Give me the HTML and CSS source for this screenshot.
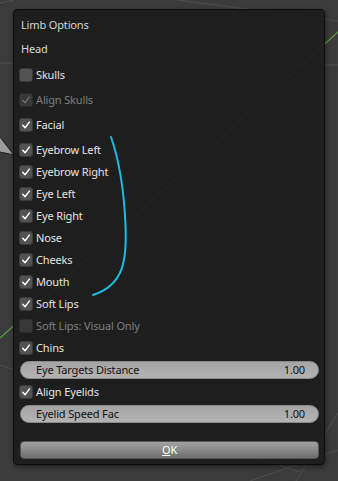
FILE: index.html
```html
<!DOCTYPE html>
<html>
<head>
<meta charset="utf-8">
<link rel="stylesheet" href="styles.css">
</head>
<body>
<div class="scene">
  <svg class="viewport" width="338" height="481" viewBox="0 0 338 481">
    <line x1="170" y1="-1" x2="338" y2="21" class="grid"/>
    <line x1="0" y1="63" x2="338" y2="65" class="grid"/>
    <line x1="0" y1="3" x2="14" y2="0" class="grid"/>
    <line x1="0" y1="365" x2="30" y2="375" class="grid"/>
    <line x1="250" y1="481" x2="338" y2="450" class="grid"/>
    <line x1="296" y1="481" x2="338" y2="413" class="grid"/>
    <line x1="200" y1="440" x2="300" y2="472" class="grid"/>
    <line x1="0" y1="338" x2="338" y2="32" class="axis"/>
    <polygon points="0,137 14,155 0,152" class="bone"/>
    <polyline points="0,137 14,155 0,152" class="bone-edge"/>
  </svg>
  <div class="panel">
    <div class="row title"><span class="lbl">Limb Options</span></div>
    <div class="row title mt2"><span class="lbl">Head</span></div>
    <div class="row check mt4"><span class="box"></span><span class="lbl">Skulls</span></div>
    <div class="row check off mt3"><span class="box"><svg viewBox="0 0 14 14"><path d="M3.2 7.4 L5.9 10.2 L10.9 3.6"/></svg></span><span class="lbl">Align Skulls</span></div>
    <div class="row check mt3"><span class="box"><svg viewBox="0 0 14 14"><path d="M3.2 7.4 L5.9 10.2 L10.9 3.6"/></svg></span><span class="lbl">Facial</span></div>
    <div class="row check mt3"><span class="box"><svg viewBox="0 0 14 14"><path d="M3.2 7.4 L5.9 10.2 L10.9 3.6"/></svg></span><span class="lbl">Eyebrow Left</span></div>
    <div class="row check"><span class="box"><svg viewBox="0 0 14 14"><path d="M3.2 7.4 L5.9 10.2 L10.9 3.6"/></svg></span><span class="lbl">Eyebrow Right</span></div>
    <div class="row check"><span class="box"><svg viewBox="0 0 14 14"><path d="M3.2 7.4 L5.9 10.2 L10.9 3.6"/></svg></span><span class="lbl">Eye Left</span></div>
    <div class="row check"><span class="box"><svg viewBox="0 0 14 14"><path d="M3.2 7.4 L5.9 10.2 L10.9 3.6"/></svg></span><span class="lbl">Eye Right</span></div>
    <div class="row check"><span class="box"><svg viewBox="0 0 14 14"><path d="M3.2 7.4 L5.9 10.2 L10.9 3.6"/></svg></span><span class="lbl">Nose</span></div>
    <div class="row check"><span class="box"><svg viewBox="0 0 14 14"><path d="M3.2 7.4 L5.9 10.2 L10.9 3.6"/></svg></span><span class="lbl">Cheeks</span></div>
    <div class="row check"><span class="box"><svg viewBox="0 0 14 14"><path d="M3.2 7.4 L5.9 10.2 L10.9 3.6"/></svg></span><span class="lbl">Mouth</span></div>
    <div class="row check"><span class="box"><svg viewBox="0 0 14 14"><path d="M3.2 7.4 L5.9 10.2 L10.9 3.6"/></svg></span><span class="lbl">Soft Lips</span></div>
    <div class="row check off"><span class="box"></span><span class="lbl">Soft Lips: Visual Only</span></div>
    <div class="row check"><span class="box"><svg viewBox="0 0 14 14"><path d="M3.2 7.4 L5.9 10.2 L10.9 3.6"/></svg></span><span class="lbl">Chins</span></div>
    <div class="row"><div class="slider"><span class="lbl">Eye Targets Distance</span><span class="lbl">1.00</span></div></div>
    <div class="row check"><span class="box"><svg viewBox="0 0 14 14"><path d="M3.2 7.4 L5.9 10.2 L10.9 3.6"/></svg></span><span class="lbl">Align Eyelids</span></div>
    <div class="row"><div class="slider"><span class="lbl">Eyelid Speed Fac</span><span class="lbl">1.00</span></div></div>
    <div class="okrow"><div class="ok"><span class="lbl"><span class="u">O</span>K</span></div></div>
  </div>
  <svg class="annot" width="338" height="481" viewBox="0 0 338 481">
    <path d="M111 137 C119 160 124 190 125.5 225 C127 260 124 285 93 295"/>
  </svg>
</div>
</body>
</html>
```

FILE: styles.css
```css
html, body {
  margin: 0;
  padding: 0;
}
body {
  width: 338px;
  height: 481px;
  overflow: hidden;
  background: #3c3c3c;
  font-family: "Noto Sans", "DejaVu Sans", sans-serif;
  font-size: 11px;
  letter-spacing: -0.15px;
}
.scene {
  position: relative;
  width: 338px;
  height: 481px;
  padding-top: 9px;
  box-sizing: border-box;
}
.viewport {
  position: absolute;
  left: 0;
  top: 0;
}
.grid {
  stroke: #505050;
  stroke-width: 1;
}
.axis {
  stroke: #5a9e44;
  stroke-width: 1.2;
}
.bone {
  fill: #9c9c9c;
}
.bone-edge {
  fill: none;
  stroke: #1a1a1a;
  stroke-width: 1;
}
.panel {
  position: relative;
  margin-left: 13px;
  width: 312px;
  height: 456px;
  box-sizing: border-box;
  border: 1px solid #0c0c0c;
  border-radius: 4px;
  background: rgba(29, 29, 29, 0.94);
  box-shadow: 1px 2px 5px rgba(0, 0, 0, 0.45);
  padding: 4px 5px 0 5px;
  display: flex;
  flex-direction: column;
}
.row {
  height: 22px;
  display: flex;
  align-items: center;
  color: #e4e4e4;
  flex-shrink: 0;
}
.lbl {
  margin-bottom: 2px;
}
.title {
  padding-left: 2px;
  color: #d6d6d6;
}
.mt2 { margin-top: 2px; }
.mt3 { margin-top: 3px; }
.mt4 { margin-top: 4px; }
.check {
  gap: 3px;
}
.box {
  width: 14px;
  height: 14px;
  box-sizing: border-box;
  border-radius: 3px;
  background: #525252;
  border: 1px solid #3a3a3a;
  display: flex;
}
.box svg {
  width: 12px;
  height: 12px;
}
.box path {
  fill: none;
  stroke: #ffffff;
  stroke-width: 1.7;
  stroke-linecap: round;
  stroke-linejoin: round;
}
.off {
  color: #7f7f7f;
}
.off .box {
  background: #383838;
  border-color: #2c2c2c;
}
.off .box path {
  stroke: #6a6a6a;
}
.slider {
  flex: 1;
  height: 18px;
  margin-left: 1px;
  border-radius: 9px;
  background: linear-gradient(#a5a5a5, #b3b3b3);
  border: 1px solid #8a8a8a;
  box-sizing: border-box;
  color: #111111;
  display: flex;
  align-items: center;
  justify-content: space-between;
  padding: 0 13px 0 15px;
}
.slider .lbl {
  margin-bottom: 1px;
}
.okrow {
  margin-top: 16px;
  padding-left: 1px;
  display: flex;
}
.ok {
  flex: 1;
  height: 18px;
  box-sizing: border-box;
  border-radius: 4px;
  border: 1px solid #555555;
  background: linear-gradient(#a2a2a2, #6e6e6e);
  color: #ffffff;
  display: flex;
  align-items: center;
  justify-content: center;
}
.ok .lbl {
  margin-bottom: 1px;
}
.u {
  text-decoration: underline;
}
.annot {
  position: absolute;
  left: 0;
  top: 0;
  pointer-events: none;
}
.annot path {
  fill: none;
  stroke: #1bbbe0;
  stroke-width: 2;
  stroke-linecap: round;
}
```
